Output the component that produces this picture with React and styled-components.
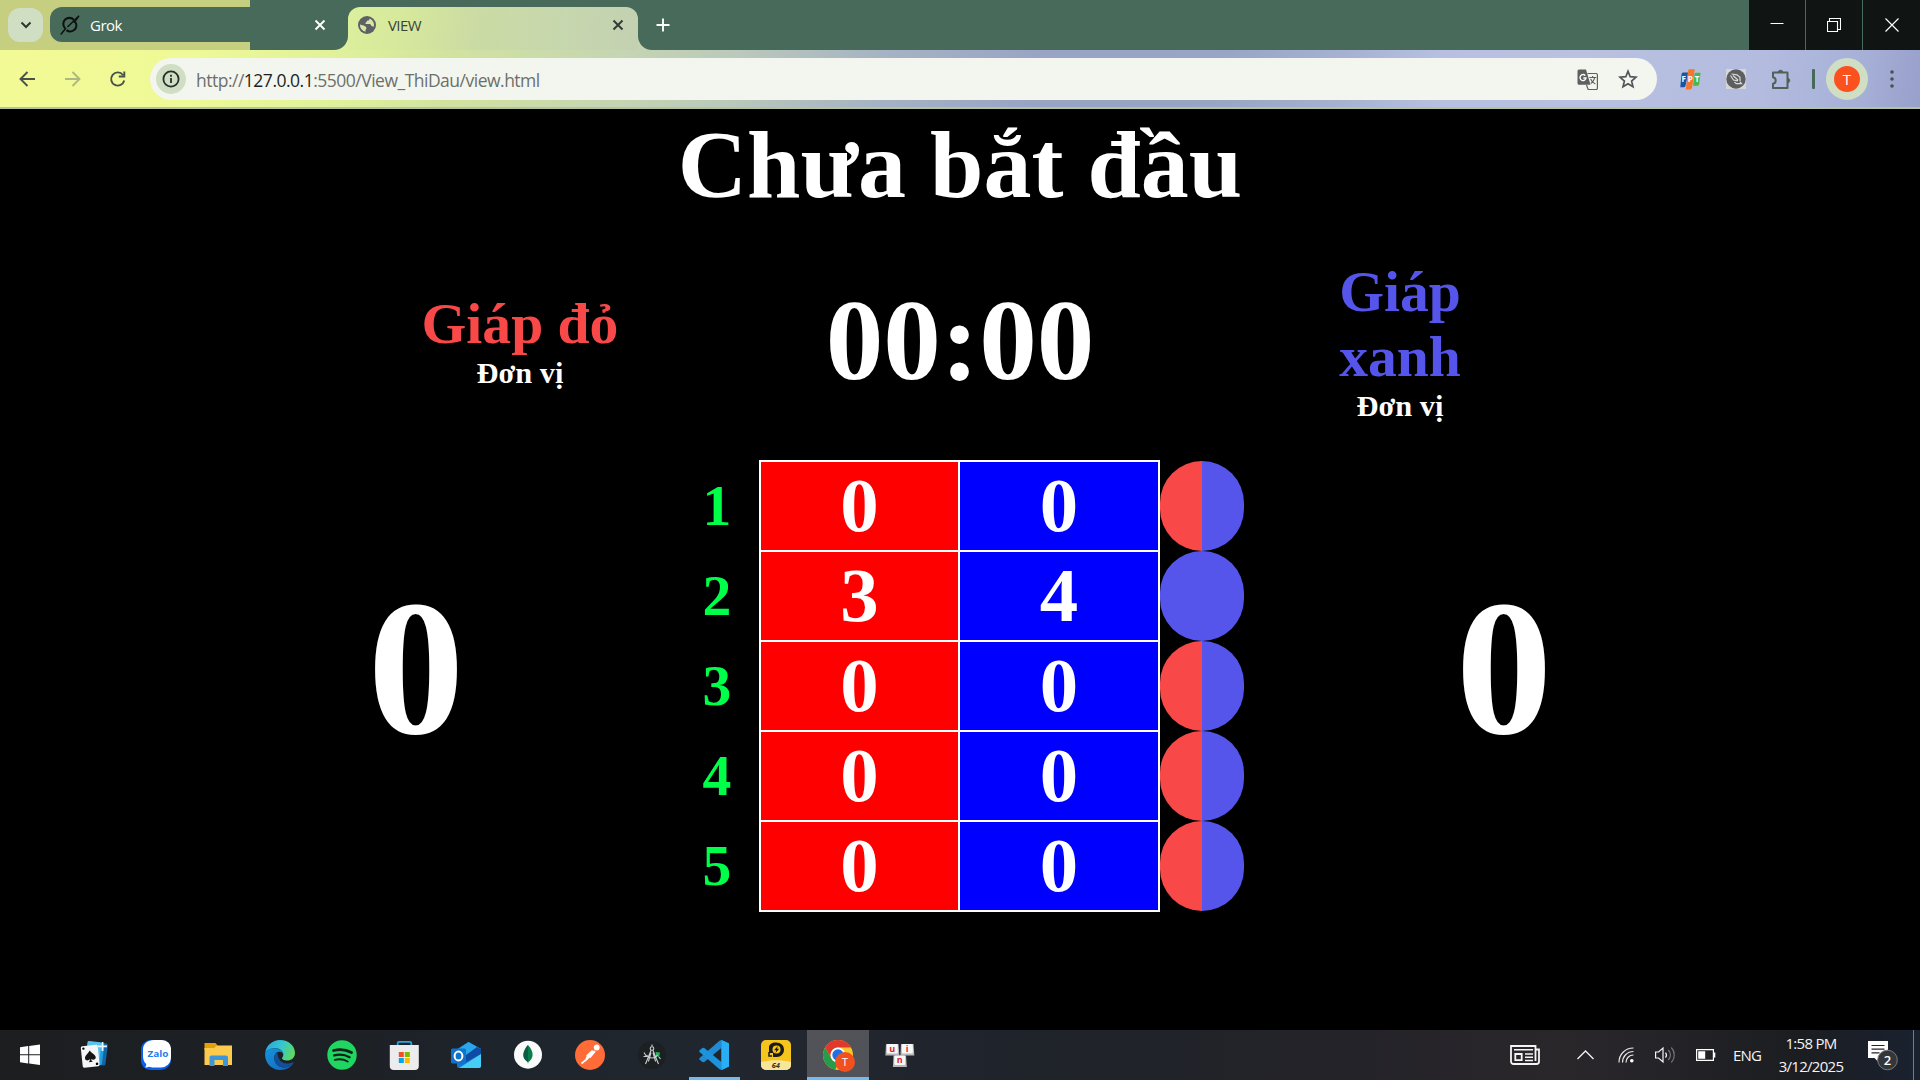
import React from "react";
import styled, { createGlobalStyle } from "styled-components";

const Global = createGlobalStyle`
  * { box-sizing: border-box; }
  body { margin: 0; background: #000; overflow: hidden; }
  svg { display: block; flex: none; }
`;

const UI = `"Open Sans", "Noto Sans", sans-serif`;

const Screen = styled.div`
  width: 1920px;
  height: 1080px;
  display: flex;
  flex-direction: column;
  background: #000;
  overflow: hidden;
  font-family: ${UI};
`;

/* ---------- browser chrome ---------- */

const THEME_GRADIENT = `linear-gradient(97deg, #f3fa95 0px, #eef997 200px, #e0f19b 345px, #d2e39f 450px, #c6d5b2 620px, #b9c9bb 740px, #a6b3c3 880px, #99a4c5 1040px, #98a5c4 1220px, #a6b1d2 1340px, #b7c0e0 1440px, #b9c1e1 1580px, #b3bcdf 1760px, #a6afd6 1860px, #959dc9 1930px)`;

const Browser = styled.header`
  height: 109px;
  flex: none;
  display: flex;
  flex-direction: column;
  background: ${THEME_GRADIENT};
`;

const TabStrip = styled.div`
  height: 50px;
  display: flex;
`;

const TabLead = styled.div`
  width: 250px;
  display: flex;
  padding: 7px 0 8px 8px;
  background: #c6ce80;
`;

const TabSearch = styled.div`
  width: 35px;
  height: 34px;
  margin: 1px 7px 0 0;
  border-radius: 12px;
  background: #d0dec3;
  display: flex;
  align-items: center;
  justify-content: center;
`;

const InactiveTab = styled.div`
  flex: 1;
  display: flex;
  align-items: center;
  gap: 10px;
  padding-left: 10px;
  border-radius: 12px 0 0 12px;
  background: #486a5b;
  color: #fff;
`;

const TabTail = styled.div`
  width: 98px;
  display: flex;
  align-items: center;
  justify-content: flex-end;
  padding: 0 22px 1px 0;
  background: #486a5b;
  border-bottom-right-radius: 14px;
`;

const TabTitle = styled.span`
  font-size: 15px;
  line-height: 20px;
  letter-spacing: ${(p) => p.$tracking || "-0.5px"};
  color: ${(p) => p.$color};
  flex: 1;
`;

const ActiveHolder = styled.div`
  width: 290px;
  background: linear-gradient(#486a5b 0 26px, transparent 26px);
`;

const ActiveTab = styled.div`
  width: 290px;
  height: 43px;
  margin-top: 7px;
  padding: 0 14px 7px 10px;
  display: flex;
  align-items: center;
  gap: 12px;
  border-radius: 12px 12px 0 0;
  background: linear-gradient(100deg, #dbef9d 0, #d6e89c 60px, #cbdba4 130px, #c7d7ad 210px, #c3d1b2 290px);
`;

const StripRest = styled.div`
  flex: 1;
  display: flex;
  align-items: center;
  padding-left: 18px;
  background: #486a5b;
  border-bottom-left-radius: 14px;
`;

const WindowButtons = styled.div`
  display: flex;
  gap: 1px;
  background: #486a5b;
`;

const WindowButton = styled.div`
  width: ${(p) => p.$w || 56}px;
  height: 50px;
  display: flex;
  align-items: center;
  justify-content: center;
  background: #101513;
`;

const Toolbar = styled.div`
  height: 57px;
  display: flex;
  align-items: center;
  padding: 1px 18px 0 18px;
`;

const NavButtons = styled.div`
  display: flex;
  width: 132px;
  gap: 26px;
`;

const Omnibox = styled.div`
  width: 1507px;
  height: 42px;
  border-radius: 21px;
  background: #f3f6ee;
  display: flex;
  align-items: center;
  padding: 0 19px 0 6px;
`;

const InfoBadge = styled.div`
  width: 30px;
  height: 30px;
  border-radius: 50%;
  background: #d0dec3;
  display: flex;
  align-items: center;
  justify-content: center;
`;

const Url = styled.div`
  margin-left: 10px;
  padding-top: 1px;
  flex: 1;
  font-size: 17.5px;
  line-height: 24px;
  letter-spacing: -0.5px;
  white-space: pre;
  color: #6c6f6c;
  b { font-weight: 400; color: #1d1f1d; }
`;

const OmniActions = styled.div`
  display: flex;
  align-items: center;
  gap: 20px;
`;

const Extensions = styled.div`
  display: flex;
  align-items: center;
  margin-left: 23px;
  gap: 25px;
`;

const ToolbarDivider = styled.div`
  width: 3px;
  height: 20px;
  margin: 0 11px 0 20px;
  border-radius: 1px;
  background: #486a5b;
`;

const Profile = styled.div`
  width: 42px;
  height: 42px;
  margin-right: 22px;
  border-radius: 50%;
  border: 8px solid #d0dec3;
  background: #fb511e;
  color: #fff;
  font-size: 15px;
  line-height: 26px;
  text-align: center;
`;

const ToolbarEdge = styled.div`
  height: 2px;
  background: #b3c3a0;
`;

/* ---------- scoreboard page ---------- */

const Board = styled.main`
  flex: 1;
  display: flex;
  flex-direction: column;
  background: #000;
  color: #fff;
  font-family: "Liberation Serif", "Times New Roman", serif;
  font-weight: 700;
`;

const Title = styled.h1`
  margin: 0;
  height: 110px;
  padding-top: 1px;
  font-size: 96px;
  line-height: 110px;
  text-align: center;
`;

const Header = styled.section`
  height: 241px;
  display: grid;
  grid-template-columns: repeat(3, 440px);
  justify-content: center;
  align-items: center;
  text-align: center;
`;

const Player = styled.div`
  padding-top: 3px;
`;

const Name = styled.div`
  width: ${(p) => p.$width};
  margin: 0 auto;
  font-size: 57.6px;
  line-height: 65px;
  color: ${(p) => p.$color};
`;

const Unit = styled.div`
  font-size: 30.4px;
  line-height: 35px;
`;

const Timer = styled.div`
  font-size: 115.2px;
  line-height: 132px;
`;

const Scores = styled.section`
  display: grid;
  grid-template-columns: 519px 84px 401px 84px 519px;
  padding-left: 156px;
`;

const Total = styled.div`
  padding-top: 98px;
  padding-left: 1px;
  font-size: 193px;
  line-height: 220px;
  text-align: center;
`;

const RoundList = styled.div`
  display: grid;
  grid-template-rows: repeat(5, 90px);
  padding-top: 1px;
`;

const RoundLabel = styled.div`
  font-size: 57.6px;
  line-height: 90px;
  text-align: center;
  color: #00ff48;
`;

const Cells = styled.div`
  display: grid;
  grid-template-columns: 197px 198px;
  grid-template-rows: repeat(5, 88px);
  gap: 2px;
  padding: 2px;
  background: #fff;
`;

const Cell = styled.div`
  font-size: 76.8px;
  line-height: 88px;
  text-align: center;
  background: ${(p) => (p.$side === "red" ? "#ff0000" : "#0000ff")};
`;

const Disc = styled.div`
  width: 84px;
  height: 90px;
  border-radius: 42px;
  background: ${(p) => (p.$winner === "blue" ? "#5555eb" : "linear-gradient(90deg, #f84848 50%, #5555eb 50%)")};
`;

/* ---------- taskbar ---------- */

const Taskbar = styled.footer`
  height: 50px;
  flex: none;
  display: flex;
  background: linear-gradient(90deg, #1c1e20 0, #1d2126 350px, #1e252d 560px, #22272f 800px, #1f232b 1000px, #242329 1350px, #2a272b 1560px, #222226 1700px, #1b1d21 1800px, #1a2230 1920px);
`;

const Apps = styled.div`
  display: flex;
  flex: 1;
`;

const AppButton = styled.div`
  width: 62px;
  height: 50px;
  display: flex;
  flex-direction: column;
  align-items: center;
  justify-content: space-between;
  padding-top: 10px;
  background: ${(p) => (p.$focused ? "#525359" : "transparent")};
`;

const StartButton = styled(AppButton)`
  width: 60px;
  margin-right: 3px;
`;

const Underline = styled.div`
  width: ${(p) => (p.$wide ? "62px" : "51px")};
  height: 3px;
  background: #76b9ed;
`;

const Tray = styled.div`
  display: flex;
  align-items: center;
  width: 410px;
  color: #f4f4f4;
`;

const Gap = styled.div`
  width: ${(p) => p.$w}px;
  flex: none;
`;

const Language = styled.div`
  width: 29px;
  font-size: 15px;
  letter-spacing: -0.8px;
  line-height: 20px;
`;

const Clock = styled.div`
  width: 72px;
  padding-bottom: 1px;
  font-size: 15px;
  line-height: 23px;
  letter-spacing: -0.7px;
  text-align: center;
  white-space: nowrap;
`;

const Peek = styled.div`
  width: 1px;
  height: 50px;
  background: #77797d;
`;

/* ---------- icons ---------- */

const CloseIcon = ({ color }) => (
  <svg width="12" height="12" viewBox="0 0 12 12" stroke={color} strokeWidth="1.9"><path d="M1.500 1.500l9 9M10.500 1.500l-9 9" /></svg>
);

const Svg30 = ({ children }) => <svg width="30" height="30" viewBox="0 0 30 30">{children}</svg>;
const IconFont = `"Open Sans", sans-serif`;

const WindowsIcon = () => (
  <Svg30><path fill="#fff" d="M5 7.200l8.200-1.200v8.200H5zM14.200 5.900L25 4.500v9.700H14.200zM5 15.200h8.200v8.200L5 22.200zM14.200 15.200H25V25l-10.800-1.500z" /></Svg30>
);
const CardsIcon = () => (
  <Svg30>
    <g transform="rotate(7 18 15)"><rect x="12" y="2.5" width="15.5" height="22" rx="1.5" fill="#1465a8" /><rect x="10" y="2.5" width="14" height="22" rx="1.5" fill="#219ee0" /><rect x="7" y="2" width="14" height="21" rx="1.5" fill="#58c2f1" /></g>
    <g transform="rotate(-6 11 17)"><rect x="2.8" y="5.5" width="17" height="21.5" rx="1.6" fill="#f6f6f6" /><path d="M11.3 10.5c2 3.2 5.4 4.6 5.4 7.2 0 2.6-3.2 3.2-4.8 1.4.1 1.5.6 2.3 1.5 3H9.2c.9-.7 1.4-1.5 1.500-3-1.6 1.8-4.8 1.2-4.8-1.4 0-2.6 3.4-4 5.4-7.2z" fill="#161616" /><circle cx="5.3" cy="8" r="1.2" /><circle cx="17.3" cy="24.5" r="1.3" /></g>
    <path d="M23.5 2v9M19 6.4h9" stroke="#e9f8ff" strokeWidth="1.8" />
  </Svg30>
);
const ZaloIcon = () => (
  <Svg30>
    <path d="M11 0h9a10 10 0 0 1 10 10v10a10 10 0 0 1-10 10H9a9 9 0 0 1-9-9V10A10 10 0 0 1 11 0z" fill="#0560f2" />
    <path d="M13 0h8a9 9 0 0 1 9 9.500v8.500a10 10 0 0 1-10 9.500h-7.500c-2 0-3-.3-4.500-.8-1.500.7-3 .8-4 .6.900-1 1.400-2 1.200-3.200C3 22 2 19.500 2 16V9C2.500 3.500 6.500 0 13 0z" fill="#fff" />
    <text x="17" y="17.300" textAnchor="middle" fontFamily={IconFont} fontWeight="700" fontSize="9.500" textLength="21" lengthAdjust="spacingAndGlyphs" fill="#2b7de9">Zalo</text>
  </Svg30>
);
const FolderIcon = () => (
  <Svg30>
    <path d="M1.500 3h11l2 2.500V10h-13z" fill="#e3a008" />
    <path d="M1.500 8h9.500l3-2.500h15V25H1.500z" fill="#fccb4e" />
    <path d="M6.500 26V17.500a2 2 0 0 1 2-2h14.500a2 2 0 0 1 2 2V26h-5v-6h-8.500v6z" fill="#3d96d9" />
  </Svg30>
);
const EdgeIcon = () => (
  <Svg30>
    <defs>
      <linearGradient id="edgeTop" x1="0" y1="0.3" x2="1" y2="0.6"><stop offset="0" stopColor="#28a9df" /><stop offset=".5" stopColor="#37c6cf" /><stop offset="1" stopColor="#5fdb59" /></linearGradient>
      <linearGradient id="edgeLow" x1="0" y1="0" x2="1" y2="1"><stop offset="0" stopColor="#1694dd" /><stop offset="1" stopColor="#1165bc" /></linearGradient>
    </defs>
    <path d="M.2 13C1 5.500 7.500 0 15 0c9 0 15 6 15 13 0 5-4 7.500-8 7.500-3.500 0-5-1.200-5-2.200 0-.8 1.300-1.500 1.300-3.800 0-3-3-6.300-8-6.300C5.500 8.200 1.500 10 .2 13z" fill="url(#edgeTop)" />
    <path d="M.2 13C2 9.500 6 8.200 9.500 8.200c5.500 0 8.800 3.300 8.800 6-1-1.700-2.500-2.400-4-2.400-3 0-5 3-5 6.200 0 5.500 4.500 9.500 9.500 9.500 4 0 7.500-2 10-5C26.500 27 21.500 30 15 30 6 30-.8 22 .2 13z" fill="url(#edgeLow)" />
    <path d="M12.500 12.300c-2.200 1.200-3.400 3.400-3.200 6.200.4 5.300 4.700 9 9.500 9 4 0 7.200-1.600 9.700-4.700.3-.5-.2-.8-.7-.5-6.300 3-15.300 1-15.300-10z" fill="#124f9b" />
  </Svg30>
);
const SpotifyIcon = () => (
  <Svg30><circle cx="15" cy="15" r="14.700" fill="#1fd760" /><g fill="none" stroke="#14211a" strokeLinecap="round"><path d="M6.500 10.500c6-1.600 12.500-1 18 2" strokeWidth="2.800" /><path d="M7.200 15.400c5.400-1.400 10.800-.8 15.400 1.800" strokeWidth="2.300" /><path d="M7.800 19.900c4.500-1.100 9-.6 12.900 1.600" strokeWidth="1.900" /></g></Svg30>
);
const StoreIcon = () => (
  <Svg30>
    <path d="M8.700 7V3.200a1.400 1.400 0 0 1 1.400-1.400h10.800a1.400 1.400 0 0 1 1.400 1.400V7" fill="none" stroke="#28a4e6" strokeWidth="1.800" />
    <path d="M.8 5h29v21a4 4 0 0 1-4 4H4.800a4 4 0 0 1-4-4z" fill="#ececec" />
    <path fill="#f25022" d="M9.800 12h5v5h-5z" /><path fill="#7fba00" d="M15.800 12h5v5h-5z" /><path fill="#00a4ef" d="M9.800 18h5v5h-5z" /><path fill="#ffb900" d="M15.800 18h5v5h-5z" />
  </Svg30>
);
const OutlookIcon = () => (
  <Svg30>
    <path d="M6 9L17.500 2 30 9v17a2 2 0 0 1-2 2H8a2 2 0 0 1-2-2z" fill="#1577cc" />
    <path d="M8 8.500L17.500 2 30 9 17 17z" fill="#29a7ea" />
    <path d="M30 9v5L15 22l-4-4L26 7z" fill="#0f4aa5" />
    <path d="M30 14v12a2 2 0 0 1-2 2H8z" fill="#45cdf5" />
    <rect x="0" y="8.500" width="15" height="15" rx="1.500" fill="#0f73cc" />
    <ellipse cx="7.500" cy="16" rx="3.900" ry="4.500" fill="none" stroke="#fff" strokeWidth="2" />
  </Svg30>
);
const MongoIcon = () => (
  <Svg30><circle cx="15" cy="14.700" r="14" fill="#fafafa" /><path d="M15 5c3.500 4 4.800 7 4.600 10.200-.2 3-1.800 5-4.200 6.800l-.4 2-.4-2c-2.600-1.800-4.200-3.800-4.200-7C10.400 12 12 8.500 15 5z" fill="#0a7d4f" /><path d="M15 5v17c-2.900-1.800-4.600-3.900-4.600-7S12 8.500 15 5z" fill="#0c5c41" /></Svg30>
);
const PostmanIcon = () => (
  <Svg30><circle cx="15" cy="15" r="15" fill="#ff6c37" /><circle cx="21.700" cy="7.500" r="2.900" fill="#fff" /><path d="M11 15.500l6-5.500 3.500 2-5 6z" fill="#fff" /><path d="M20 11l-8 8-5.500 4.500M12.500 16L11 19.500" stroke="#fff" strokeWidth="1.700" fill="none" /></Svg30>
);
const AndroidStudioIcon = () => (
  <Svg30>
    <circle cx="15" cy="15" r="14" fill="#1d2022" />
    <path d="M18.500 12l4.500.5-1 5-3-2z" fill="#24b35a" />
    <g fill="none" stroke="#c9cfd2" strokeWidth="1.100"><circle cx="15" cy="8.500" r="1.800" /><path d="M15 4.500v2M14.200 10L8.500 24M15.800 10l5.700 14M14 12.500l-2.600 9M16 12.500l2.600 9M9.500 15c2.500 4 8.500 4 11 0" /><path d="M7 12.500l2.500 4M6.500 16.500h3.500M22 17l1.500 2" /></g>
  </Svg30>
);
const VSCodeIcon = () => (
  <Svg30>
    <path d="M22.500 0L30 3.500v23L22.500 30z" fill="#29adf5" />
    <path d="M22.500 0L23 7.500 5 22.300 3.400 22 .3 19.500v-1.200L20.500.7z" fill="#1f8bd5" />
    <path d="M22.500 30L23 22.500 5 7.700 3.400 8 .3 10.500v1.200L20.500 29.300z" fill="#1c93db" />
    <path d="M22.500 0L30 3.500v23L22.500 30z" fill="#29adf5" />
  </Svg30>
);
const LDPlayerIcon = () => (
  <Svg30>
    <rect width="30" height="30" rx="5" fill="#f6c51d" />
    <path d="M0 22c9-2.500 21-2.500 30 0v3a5 5 0 0 1-5 5H5a5 5 0 0 1-5-5z" fill="#f8e59c" />
    <path d="M8 14V7.500C8 4.500 10.500 2.500 15 2.500c5 0 8 3 8 7.300 0 4-3 7.200-7.200 7.200H12v-4H8z" fill="#1d1b17" />
    <circle cx="15.500" cy="9.500" r="4" fill="#f6c51d" />
    <path d="M16.800 6L13 10.200h2.300L14.500 13l3.700-4.200H16z" fill="#1d1b17" />
    <path d="M8 12v4h3" stroke="#1d1b17" strokeWidth="1.500" fill="none" />
    <text x="14.800" y="28" textAnchor="middle" fontFamily={IconFont} fontWeight="700" fontStyle="italic" fontSize="7.500" fill="#3b3420">64</text>
  </Svg30>
);
const ChromeBox = styled.svg`
  margin-bottom: -2px;
`;
const ChromeIcon = () => (
  <ChromeBox width="34" height="34" viewBox="0 0 34 34">
    <circle cx="17" cy="15" r="15" fill="#f9c62c" />
    <path d="M4 7.500A15 15 0 0 1 30 7.500H17a7.500 7.500 0 0 0-6.500 11.200z" fill="#e0382c" />
    <path d="M4 7.500l6.500 11.200A7.500 7.500 0 0 0 17 22.500l1 0-4 7.200A15 15 0 0 1 4 7.500z" fill="#269b4b" />
    <circle cx="17" cy="15" r="7.500" fill="#fff" /><circle cx="17" cy="15" r="5.700" fill="#1f6fe5" />
    <circle cx="24" cy="22" r="10" fill="#f1501f" />
    <text x="24" y="26" textAnchor="middle" fontFamily={IconFont} fontSize="11.500" fill="#fff">T</text>
  </ChromeBox>
);
const UnikeyIcon = () => (
  <Svg30>
    {[[1, 4, "u"], [16, 4, "i"], [8.5, 15.5, "n"]].map(([x, y, c]) => (
      <g key={c}>
        <path d={`M${x} ${y}h12.500l.8 11.500H${x - 0.6}z`} fill="#b9b9bb" />
        <rect x={x + 0.8} y={y} width="11" height="9.500" rx="1" fill="#f8f8f8" />
        <text x={x + 6.2} y={y + 7.5} textAnchor="middle" fontFamily={IconFont} fontWeight="700" fontSize="9" fill="#e0262b">{c}</text>
      </g>
    ))}
  </Svg30>
);

const rounds = [
  { red: 0, blue: 0 },
  { red: 3, blue: 4, winner: "blue" },
  { red: 0, blue: 0 },
  { red: 0, blue: 0 },
  { red: 0, blue: 0 },
];

const apps = [CardsIcon, ZaloIcon, FolderIcon, EdgeIcon, SpotifyIcon, StoreIcon, OutlookIcon, MongoIcon, PostmanIcon, AndroidStudioIcon];

function BrowserChrome() {
  return (
    <Browser>
      <TabStrip>
        <TabLead>
          <TabSearch>
            <svg width="12" height="8" viewBox="0 0 12 8" fill="none" stroke="#303632" strokeWidth="2"><path d="M1.500 1.500L6 6l4.500-4.500" /></svg>
          </TabSearch>
          <InactiveTab>
            <svg width="20" height="20" viewBox="0 0 20 20" fill="none" stroke="#0d1210" strokeWidth="2.100">
              <path d="M13.800 4.800A6 6 0 0 0 5 13.200M6.500 15.100A6 6 0 0 0 15.200 7" /><path d="M.8 19.500L6 13M7.500 12L19 .8M19 .8l-5 7" strokeWidth="1.500" />
            </svg>
            <TabTitle $color="#fff">Grok</TabTitle>
          </InactiveTab>
        </TabLead>
        <TabTail><CloseIcon color="#fff" /></TabTail>
        <ActiveHolder>
          <ActiveTab>
            <svg width="18" height="18" viewBox="0 0 18 18"><circle cx="9" cy="9" r="9" fill="#5d6165" /><path d="M2 8.200c1.500 1.300 3 .6 4 1.500 1.300 1 2.400 1 2.400 2.300 0 1-.9 1.400-.9 2.400v1.400A7 7 0 0 1 2 8.200zM11.500 2.500c-.1 1.400-.3 2-1.700 2.100-1.300.1-.8 1.500-1.800 1.900-.9.300-.9 1.400.2 1.500h3.300c1.700 0 1.300 2 2.500 2.300.8.200 1.200.2 1.900.2a7 7 0 0 0-4.400-8z" fill="#d8e8a4" /></svg>
            <TabTitle $color="#3a423c" $tracking="-0.6px">VIEW</TabTitle>
            <CloseIcon color="#333a35" />
          </ActiveTab>
        </ActiveHolder>
        <StripRest>
          <svg width="14" height="14" viewBox="0 0 14 14" stroke="#fff" strokeWidth="1.900"><path d="M7 .5v13M.5 7h13" /></svg>
        </StripRest>
        <WindowButtons>
          <WindowButton><svg width="14" height="14" viewBox="0 0 14 14" stroke="#fff"><path d="M.5 5.500h13" /></svg></WindowButton>
          <WindowButton><svg width="14" height="14" viewBox="0 0 14 14" fill="none" stroke="#fff"><path d="M.5 3.500h10v10H.5zM2.500 3V.5h11v11H11" strokeWidth="1.100" /></svg></WindowButton>
          <WindowButton $w={57}><svg width="14" height="14" viewBox="0 0 14 14" stroke="#fff" strokeWidth="1.200"><path d="M.5 .5l13 13M13.500 .5l-13 13" /></svg></WindowButton>
        </WindowButtons>
      </TabStrip>
      <Toolbar>
        <NavButtons>
          <svg width="19" height="18" viewBox="0 0 19 18" fill="none" stroke="#48524a" strokeWidth="1.900"><path d="M17 9H3M9.500 2L2.500 9l7 7" /></svg>
          <svg width="19" height="18" viewBox="0 0 19 18" fill="none" stroke="#aeb87f" strokeWidth="1.900"><path d="M2 9h14M9.500 2l7 7-7 7" /></svg>
          <svg width="19" height="18" viewBox="0 0 19 18" fill="none" stroke="#48524a" strokeWidth="1.900"><path d="M15 5A6.600 6.600 0 1 0 16.200 10.500M16.300 1.500V6.500h-5.500" /></svg>
        </NavButtons>
        <Omnibox>
          <InfoBadge>
            <svg width="18" height="18" viewBox="0 0 18 18" fill="none" stroke="#27302a" strokeWidth="1.800"><circle cx="9" cy="9" r="7.600" /><path d="M9 8v5M9 4.800v2" /></svg>
          </InfoBadge>
          <Url>http://<b>127.0.0.1</b>:5500/View_ThiDau/view.html</Url>
          <OmniActions>
            <svg width="21" height="21" viewBox="0 0 21 21">
              <path d="M2 .5h7l4.500 15.200H2A1.500 1.500 0 0 1 .5 14.200V2A1.500 1.500 0 0 1 2 .5z" fill="#5c605e" />
              <path d="M10.500 4.500h8.700a1.200 1.200 0 0 1 1.200 1.200v13.600a1.200 1.200 0 0 1-1.200 1.200h-8L9.500 16" fill="none" stroke="#5c605e" strokeWidth="1.200" />
              <path d="M12.300 8.500h7M15.700 7v1.500M17.800 8.500c-.5 2.500-2 4.500-4 6M13.600 10c1 2 2.800 4 4.700 5" stroke="#5c605e" strokeWidth="1.200" fill="none" />
              <path d="M8.300 6.600A3 3 0 1 0 9 9H6.300" fill="none" stroke="#fff" strokeWidth="1.400" />
            </svg>
            <svg width="20" height="20" viewBox="0 0 20 20" fill="none" stroke="#50555a" strokeWidth="1.700"><path d="M10 2.200l2.200 5.500 5.800.5-4.400 3.900 1.400 5.700-5-3.100-5 3.100 1.400-5.700L2 8.200l5.800-.5z" /></svg>
          </OmniActions>
        </Omnibox>
        <Extensions>
          <svg width="21" height="21" viewBox="0 0 21 21">
            <path d="M2.800 3.500h5.500L5.500 16.800a2 2 0 0 1-2 1.500H.3l1.200-13a2 2 0 0 1 1.300-1.800z" fill="#1556a6" />
            <path d="M9.500.3h5.300L12 18.800a2 2 0 0 1-2 1.600H5.800L8 2a2 2 0 0 1 1.500-1.700z" fill="#f4772b" />
            <path d="M15.600 3.800h5l-1.500 11.400a2 2 0 0 1-2 1.600h-4l1.300-11a2 2 0 0 1 1.200-2z" fill="#4cb749" />
            <text x="10.500" y="13" textAnchor="middle" fontFamily={IconFont} fontWeight="700" fontSize="8" textLength="18" fill="#fff">FPT</text>
          </svg>
          <svg width="20" height="20" viewBox="0 0 20 20"><path d="M0 0h20v20H0z" fill="#d6d6d8" /><circle cx="10" cy="10" r="9.700" fill="#5d5e60" /><g fill="none" stroke="#dadada" strokeWidth="1.200"><path d="M4.500 6.500l3 4.500 4.500.8M5.500 5l5.500.8 3 2.500v4M7 6.500l5 4.500M8.500 13l1.800 1.700h5.200l-1.500-1.700" /></g></svg>
          <svg width="21" height="21" viewBox="0 0 21 21" fill="none" stroke="#52605a" strokeWidth="2"><path d="M2 3.500h14.500V19H2v-4.200c3.600-.6 3.600-6 0-6.600z" strokeLinejoin="round" /><path d="M7 3a2.600 2.600 0 0 1 5 0zM17 9a2.600 2.600 0 0 1 0 5z" fill="#52605a" strokeWidth=".6" /></svg>
        </Extensions>
        <ToolbarDivider />
        <Profile>T</Profile>
        <svg width="4" height="18" viewBox="0 0 4 18" fill="#48524e"><circle cx="2" cy="2" r="1.800" /><circle cx="2" cy="9" r="1.800" /><circle cx="2" cy="16" r="1.800" /></svg>
      </Toolbar>
      <ToolbarEdge />
    </Browser>
  );
}

function SystemTray() {
  return (
    <Tray>
      <svg width="30" height="20" viewBox="0 0 30 20" fill="none" stroke="#f4f4f4" strokeWidth="1.800"><path d="M25.500 16V1H1v15.500A2.500 2.500 0 0 0 3.500 19H26.500a2.500 2.500 0 0 0 2.500-2.500V4.500h-3" /><path d="M4 4.800h19M15 9h8M15 12.300h8M15 15.600h8" strokeWidth="1.500" /><path d="M5.300 9h6.400v6.200H5.300z" /></svg>
      <Gap $w={37} />
      <svg width="17" height="10" viewBox="0 0 17 10" fill="none" stroke="#f4f4f4" strokeWidth="1.300"><path d="M.5 9L8.500 1l8 8" /></svg>
      <Gap $w={24} />
      <svg width="16" height="16" viewBox="0 0 16 16" fill="none" stroke="#e8e8e8" strokeWidth="1.200"><path d="M1 15.500C1 7.500 7 1 15.500 1M4.500 15.500c0-6 4.500-11 11-11M8 15.500C8 11.500 11 8 15.500 8" /><circle cx="13.800" cy="13.800" r="1.800" fill="#fff" stroke="none" /></svg>
      <Gap $w={21} />
      <svg width="21" height="18" viewBox="0 0 21 18" fill="none" stroke="#f4f4f4" strokeWidth="1.200"><path d="M.6 6h3L8 2v14l-4.400-4H.6z" /><path d="M10.500 6.500a4 4 0 0 1 0 5" /><path d="M13.300 4a7 7 0 0 1 0 10M16.300 1.500a11 11 0 0 1 0 15" stroke="#77777b" /></svg>
      <Gap $w={20} />
      <svg width="20" height="12" viewBox="0 0 20 12"><path d="M.6 .6h16.800v10.800H.6z" fill="none" stroke="#fff" strokeWidth="1.200" /><path d="M2.200 2.200h7v7.600h-7zM18 3.500h1.300v5H18z" fill="#fff" /></svg>
      <Gap $w={17} />
      <Language>ENG</Language>
      <Gap $w={13} />
      <Clock>1:58 PM<br />3/12/2025</Clock>
      <Gap $w={20} />
      <svg width="32" height="32" viewBox="0 0 32 32">
        <path d="M1 2h20v17h-9v4.500L7.500 19H1z" fill="#fff" />
        <path d="M4.500 6.500h13M4.500 10.200h13M4.500 13.900h8" stroke="#22252b" strokeWidth="1.200" />
        <circle cx="20.500" cy="21" r="9.800" fill="#34363a" stroke="#77797d" />
        <text x="20.500" y="25.500" textAnchor="middle" fontFamily={IconFont} fontWeight="600" fontSize="13" fill="#fff">2</text>
      </svg>
      <Gap $w={14} />
      <Peek />
    </Tray>
  );
}

export default function App() {
  return (
    <Screen>
      <Global />
      <BrowserChrome />
      <Board>
        <Title>Chưa bắt đầu</Title>
        <Header>
          <Player>
            <Name $width="300px" $color="#f84848">Giáp đỏ</Name>
            <Unit>Đơn vị</Unit>
          </Player>
          <Timer>00:00</Timer>
          <Player>
            <Name $width="160px" $color="#5555eb">Giáp xanh</Name>
            <Unit>Đơn vị</Unit>
          </Player>
        </Header>
        <Scores>
          <Total>0</Total>
          <RoundList>
            {rounds.map((_, i) => <RoundLabel key={i}>{i + 1}</RoundLabel>)}
          </RoundList>
          <Cells>
            {rounds.map((r, i) => (
              <React.Fragment key={i}>
                <Cell $side="red">{r.red}</Cell>
                <Cell $side="blue">{r.blue}</Cell>
              </React.Fragment>
            ))}
          </Cells>
          <RoundList>
            {rounds.map((r, i) => <Disc key={i} $winner={r.winner} />)}
          </RoundList>
          <Total>0</Total>
        </Scores>
      </Board>
      <Taskbar>
        <Apps>
          <StartButton><WindowsIcon /></StartButton>
          {apps.map((Icon, i) => <AppButton key={i}><Icon /></AppButton>)}
          <AppButton><VSCodeIcon /><Underline /></AppButton>
          <AppButton><LDPlayerIcon /></AppButton>
          <AppButton $focused><ChromeIcon /><Underline $wide /></AppButton>
          <AppButton><UnikeyIcon /></AppButton>
        </Apps>
        <SystemTray />
      </Taskbar>
    </Screen>
  );
}
